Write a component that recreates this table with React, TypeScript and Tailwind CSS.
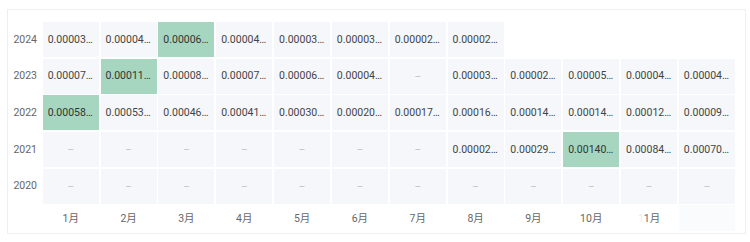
import React from "react";

type Cell = { v: string; hl?: boolean } | null;

const D = "–";
const rows: { year: string; cells: Cell[] }[] = [
  {
    year: "2024",
    cells: [
      { v: "0.00003…" },
      { v: "0.00004…" },
      { v: "0.00006…", hl: true },
      { v: "0.00004…" },
      { v: "0.00003…" },
      { v: "0.00003…" },
      { v: "0.00002…" },
      { v: "0.00002…" },
      null,
      null,
      null,
      null,
    ],
  },
  {
    year: "2023",
    cells: [
      { v: "0.00007…" },
      { v: "0.00011…", hl: true },
      { v: "0.00008…" },
      { v: "0.00007…" },
      { v: "0.00006…" },
      { v: "0.00004…" },
      { v: D },
      { v: "0.00003…" },
      { v: "0.00002…" },
      { v: "0.00005…" },
      { v: "0.00004…" },
      { v: "0.00004…" },
    ],
  },
  {
    year: "2022",
    cells: [
      { v: "0.00058…", hl: true },
      { v: "0.00053…" },
      { v: "0.00046…" },
      { v: "0.00041…" },
      { v: "0.00030…" },
      { v: "0.00020…" },
      { v: "0.00017…" },
      { v: "0.00016…" },
      { v: "0.00014…" },
      { v: "0.00014…" },
      { v: "0.00012…" },
      { v: "0.00009…" },
    ],
  },
  {
    year: "2021",
    cells: [
      { v: D },
      { v: D },
      { v: D },
      { v: D },
      { v: D },
      { v: D },
      { v: D },
      { v: "0.00002…" },
      { v: "0.00029…" },
      { v: "0.00140…", hl: true },
      { v: "0.00084…" },
      { v: "0.00070…" },
    ],
  },
  {
    year: "2020",
    cells: Array.from({ length: 12 }, () => ({ v: D })),
  },
];

const months = ["1月", "2月", "3月", "4月", "5月", "6月", "7月", "8月", "9月", "10月", "11月", ""];

export default function App() {
  return (
    <div
      className="w-[750px] h-[242px] bg-white overflow-hidden"
      style={{ fontFamily: "Roboto, 'Noto Sans CJK SC', sans-serif" }}
    >
      <div className="ml-[7px] mt-[9px] w-[739px] h-[225px] border border-[#efefef] pt-[12px] pl-0">
        <div className="grid grid-cols-[33px_repeat(12,1fr)] gap-x-[1.7px] gap-y-[1.7px] w-[727px]">
          {rows.map((r) => (
            <React.Fragment key={r.year}>
              <div className="h-[35px] flex items-center justify-end pr-[4px] text-[10.5px] text-[#666]">
                {r.year}
              </div>
              {r.cells.map((c, i) =>
                c === null ? (
                  <div key={i} className="h-[35px]" />
                ) : c.v === D ? (
                  <div
                    key={i}
                    className="h-[35px] flex items-center justify-center bg-[#f5f7fa] text-[10px] text-[#c4c4c4]"
                  >
                    –
                  </div>
                ) : (
                  <div
                    key={i}
                    className={
                      c.hl
                        ? "h-[35px] flex items-center pl-[5px] bg-[#a6d6c0] text-[10.5px] text-[#333] whitespace-nowrap overflow-hidden"
                        : "h-[35px] flex items-center pl-[5px] bg-[#f5f7fa] text-[10.5px] text-[#444] whitespace-nowrap overflow-hidden"
                    }
                  >
                    {c.v}
                  </div>
                )
              )}
            </React.Fragment>
          ))}
          <div className="h-[26px]" />
          {months.map((m, i) => (
            <div
              key={i}
              className={
                i === 11
                  ? "h-[26px] bg-[#fafbfc]"
                  : "h-[26px] flex items-center justify-center text-[10.5px] text-[#666]"
              }
            >
              {i === 10 ? (
                <span>
                  <span className="text-[#ececec]">1</span>1月
                </span>
              ) : (
                m
              )}
            </div>
          ))}
        </div>
      </div>
    </div>
  );
}
